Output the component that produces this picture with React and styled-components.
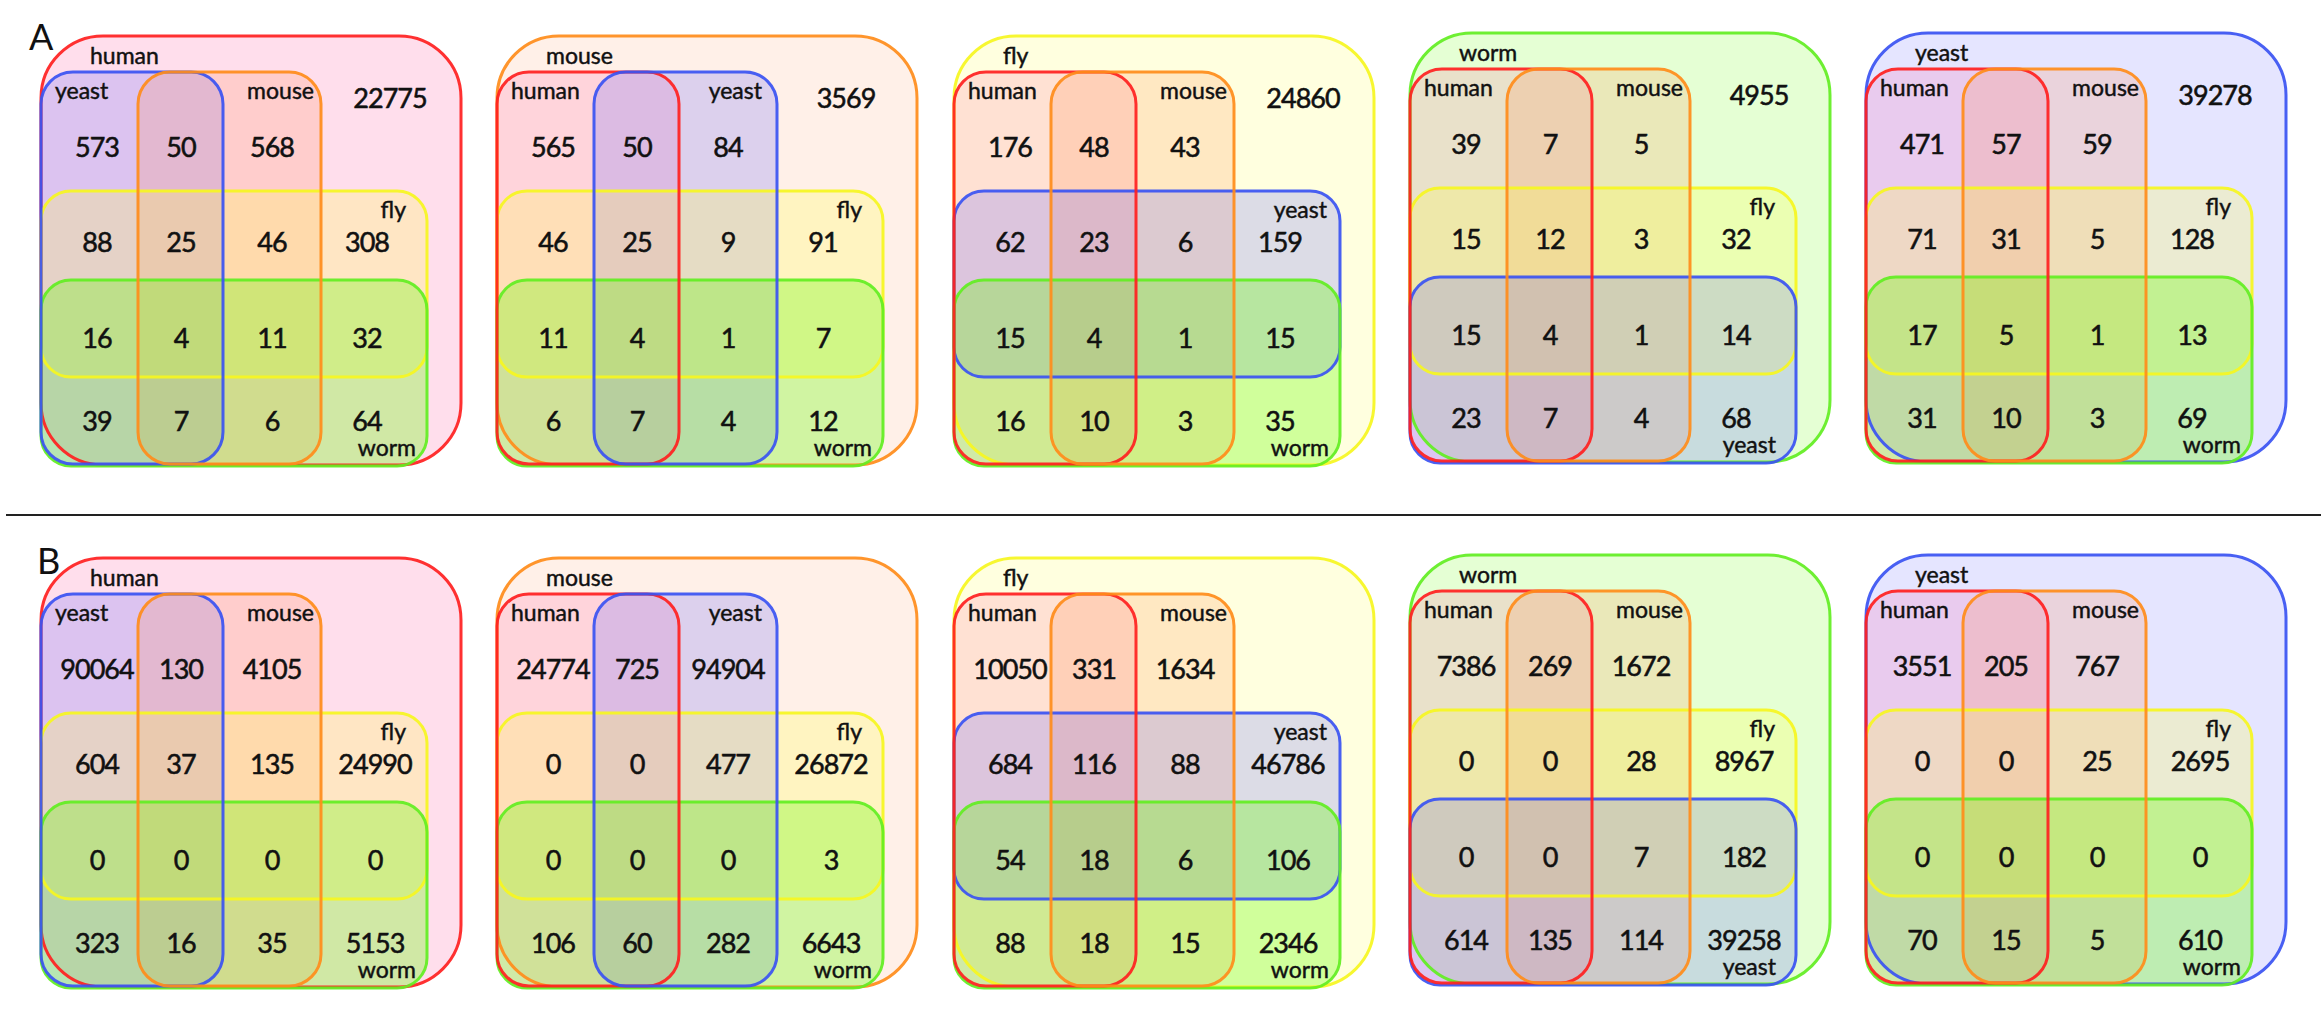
import React from "react";
import styled, { createGlobalStyle } from "styled-components";

const Global = createGlobalStyle`
  html, body { margin: 0; padding: 0; background: #ffffff; }
  body { font-family: Lato, "Noto Sans", sans-serif; }
`;

const SPECIES = {
  human: { stroke: "#ff1f1f", fill: "rgb(255,90,160)", alpha: 0.18, outer: 0.2 },
  mouse: { stroke: "#ff8c1a", fill: "rgb(255,140,80)", alpha: 0.2, outer: 0.13 },
  fly: { stroke: "#f6f620", fill: "rgb(255,255,80)", alpha: 0.26, outer: 0.18 },
  worm: { stroke: "#62ee22", fill: "rgb(100,255,0)", alpha: 0.3, outer: 0.17 },
  yeast: { stroke: "#3a52f2", fill: "rgb(110,110,255)", alpha: 0.24, outer: 0.18 },
};

const Page = styled.main`
  width: 2321px;
  height: 1025px;
  display: flex;
  flex-direction: column;
  background: #ffffff;
  overflow: hidden;
`;

const Row = styled.section`
  position: relative;
  display: flex;
  align-items: flex-start;
  gap: 26.25px;
  padding-left: 37px;
  padding-top: ${(p) => p.$top}px;
`;

const PanelLetter = styled.span`
  position: absolute;
  left: ${(p) => p.$x}px;
  top: ${(p) => p.$y}px;
  font-family: Lato, "Noto Sans", sans-serif;
  font-size: 36px;
  line-height: 1;
  color: #111;
`;

const Divider = styled.hr`
  flex: none;
  margin: 42px 0 38px 6px;
  border: none;
  height: 2px;
  background: #222;
`;

const Chart = styled.svg`
  flex: none;
  width: 430px;
  height: 440px;
  overflow: visible;
  margin-top: ${(p) => (p.$lift ? -3 : 0)}px;
`;

const Fill = styled.rect`
  stroke: none;
`;

const Outline = styled.rect`
  fill: none;
  stroke-width: 3px;
  stroke-opacity: 0.92;
`;

const Num = styled.text`
  font-family: Lato, "Noto Sans", sans-serif;
  font-size: 27px;
  letter-spacing: -1px;
  fill: #111;
  stroke: #111;
  stroke-width: 0.55px;
  text-anchor: middle;
`;

const Tag = styled.text`
  font-family: Lato, "Noto Sans", sans-serif;
  font-size: 23px;
  fill: #111;
  stroke: #111;
  stroke-width: 0.45px;
  text-anchor: ${(p) => p.$anchor || "start"};
`;

const ROW_Y = [121, 216, 312, 395];

const V2_END = { mouse: 273, yeast: 265, human: 268 };
const H1_END = { fly: 365, yeast: 373 };
const H2_END = { worm: 375, yeast: 366 };

function Venn({ outer, v1, v2, h1, h2, total, rows, col3, lift }) {
  const cols = [56, 140, 231, col3];
  const shapes = [
    { sp: outer, x: 0, y: 0, w: 420, h: 429, r: 62, a: SPECIES[outer].outer },
    { sp: v1, x: 0, y: 36, w: 182, h: 392, r: 32 },
    { sp: v2, x: 97, y: 36, w: 183, h: 392, r: 32 },
    { sp: h1, x: 0, y: 155, w: 386, h: 186, r: 30 },
    { sp: h2, x: 0, y: 244, w: 386, h: 186, r: 30 },
  ];
  const strokeOrder = [0, 3, 4, 1, 2];
  return (
    <Chart viewBox="-4 -4 430 440" $lift={lift}>
      {shapes.map((s, i) => (
        <Fill
          key={`f${i}`}
          x={s.x}
          y={s.y}
          width={s.w}
          height={s.h}
          rx={s.r}
          ry={s.r}
          fill={SPECIES[s.sp].fill}
          fillOpacity={s.a ?? SPECIES[s.sp].alpha}
        />
      ))}
      {strokeOrder.map((i) => {
        const s = shapes[i];
        return (
          <Outline
            key={`o${i}`}
            x={s.x}
            y={s.y}
            width={s.w}
            height={s.h}
            rx={s.r}
            ry={s.r}
            stroke={SPECIES[s.sp].stroke}
          />
        );
      })}

      <Tag x={49} y={28}>{outer}</Tag>
      <Tag x={14} y={63}>{v1}</Tag>
      <Tag x={V2_END[v2]} y={63} $anchor="end">{v2}</Tag>
      <Tag x={H1_END[h1]} y={182} $anchor="end">{h1}</Tag>
      <Tag x={H2_END[h2]} y={420} $anchor="end">{h2}</Tag>

      {total != null && <Num x={349} y={72}>{total}</Num>}
      {rows.map((r, ri) =>
        r.map((n, ci) => (
          <Num key={`${ri}-${ci}`} x={cols[ci]} y={ROW_Y[ri]}>
            {n}
          </Num>
        ))
      )}
    </Chart>
  );
}

const ROW_A = [
  {
    outer: "human", v1: "yeast", v2: "mouse", h1: "fly", h2: "worm", total: 22775,
    rows: [[573, 50, 568], [88, 25, 46, 308], [16, 4, 11, 32], [39, 7, 6, 64]],
  },
  {
    outer: "mouse", v1: "human", v2: "yeast", h1: "fly", h2: "worm", total: 3569,
    rows: [[565, 50, 84], [46, 25, 9, 91], [11, 4, 1, 7], [6, 7, 4, 12]],
  },
  {
    outer: "fly", v1: "human", v2: "mouse", h1: "yeast", h2: "worm", total: 24860,
    rows: [[176, 48, 43], [62, 23, 6, 159], [15, 4, 1, 15], [16, 10, 3, 35]],
  },
  {
    outer: "worm", v1: "human", v2: "mouse", h1: "fly", h2: "yeast", total: 4955, lift: true,
    rows: [[39, 7, 5], [15, 12, 3, 32], [15, 4, 1, 14], [23, 7, 4, 68]],
  },
  {
    outer: "yeast", v1: "human", v2: "mouse", h1: "fly", h2: "worm", total: 39278, lift: true,
    rows: [[471, 57, 59], [71, 31, 5, 128], [17, 5, 1, 13], [31, 10, 3, 69]],
  },
];

const ROW_B = [
  {
    outer: "human", v1: "yeast", v2: "mouse", h1: "fly", h2: "worm",
    rows: [[90064, 130, 4105], [604, 37, 135, 24990], [0, 0, 0, 0], [323, 16, 35, 5153]],
  },
  {
    outer: "mouse", v1: "human", v2: "yeast", h1: "fly", h2: "worm",
    rows: [[24774, 725, 94904], [0, 0, 477, 26872], [0, 0, 0, 3], [106, 60, 282, 6643]],
  },
  {
    outer: "fly", v1: "human", v2: "mouse", h1: "yeast", h2: "worm",
    rows: [[10050, 331, 1634], [684, 116, 88, 46786], [54, 18, 6, 106], [88, 18, 15, 2346]],
  },
  {
    outer: "worm", v1: "human", v2: "mouse", h1: "fly", h2: "yeast", lift: true,
    rows: [[7386, 269, 1672], [0, 0, 28, 8967], [0, 0, 7, 182], [614, 135, 114, 39258]],
  },
  {
    outer: "yeast", v1: "human", v2: "mouse", h1: "fly", h2: "worm", lift: true,
    rows: [[3551, 205, 767], [0, 0, 25, 2695], [0, 0, 0, 0], [70, 15, 5, 610]],
  },
];

export default function App() {
  return (
    <>
      <Global />
      <Page>
        <Row $top={32}>
          <PanelLetter $x={29} $y={18}>A</PanelLetter>
          {ROW_A.map((d, i) => (
            <Venn key={i} {...d} col3={326} />
          ))}
        </Row>
        <Divider />
        <Row $top={0}>
          <PanelLetter $x={37} $y={-12}>B</PanelLetter>
          {ROW_B.map((d, i) => (
            <Venn key={i} {...d} col3={334} />
          ))}
        </Row>
      </Page>
    </>
  );
}
